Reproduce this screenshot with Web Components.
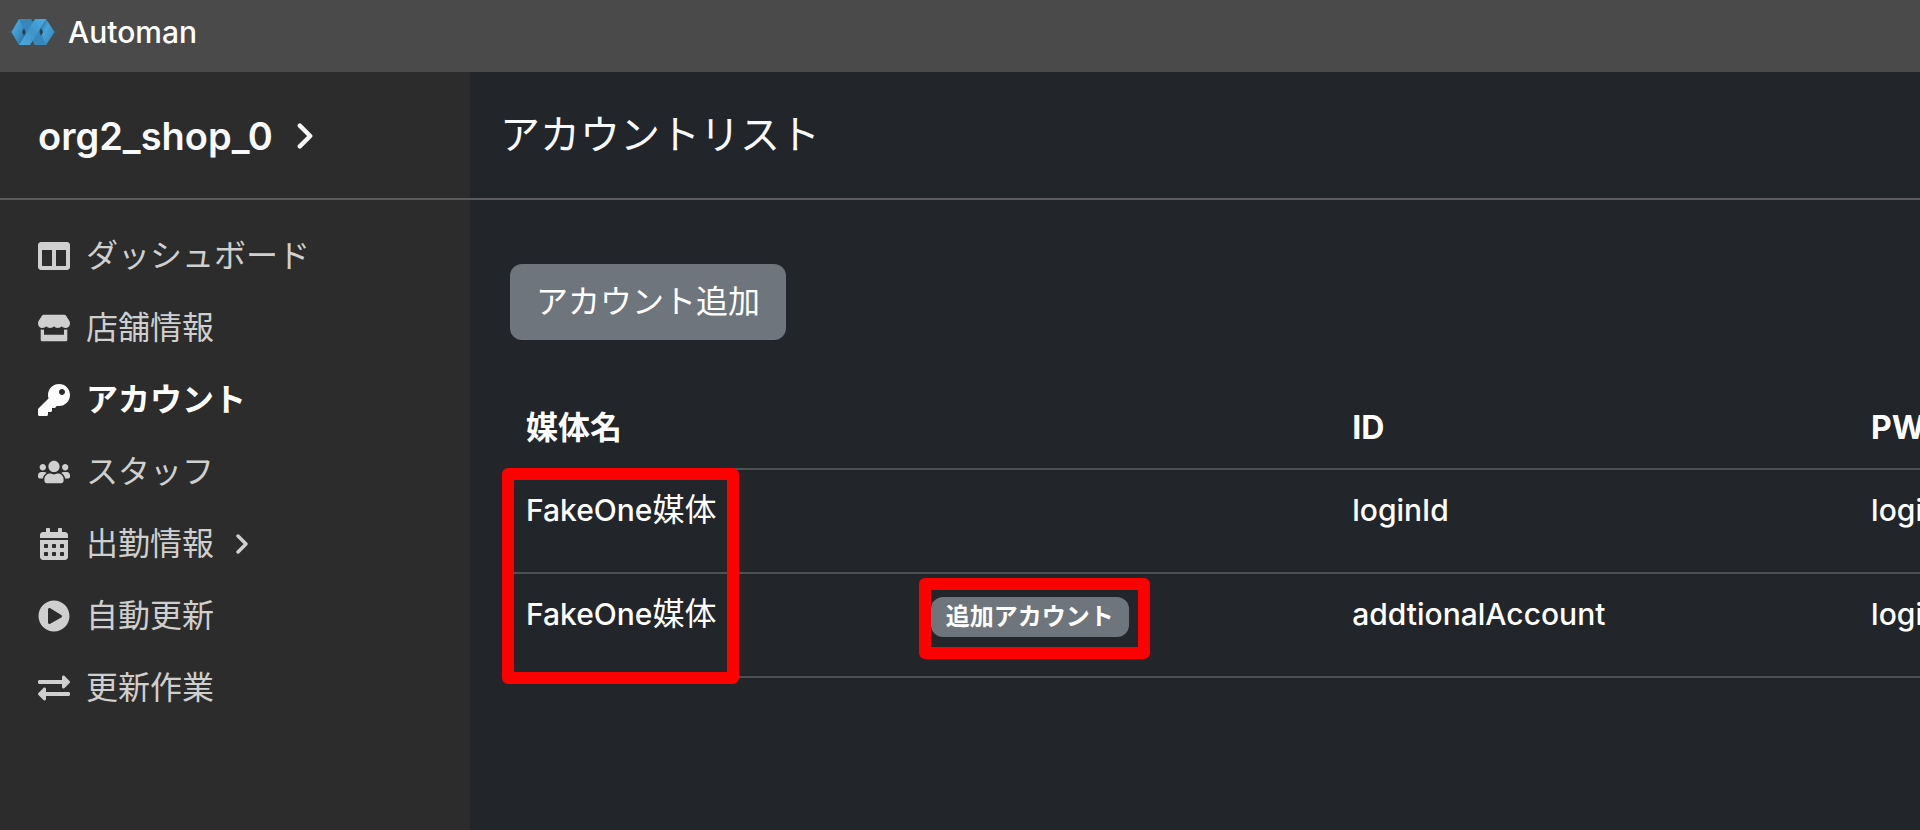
<!DOCTYPE html>
<html lang="ja">
<head>
<meta charset="utf-8">
<title>Automan</title>
<style>
  body {
    margin: 0;
    background: #22252a;
    color: #fff;
    font: 32px/48px Inter, "Noto Sans CJK JP", sans-serif;
  }
</style>
</head>
<body>
<app-shell>
  <top-bar slot="top">Automan</top-bar>

  <side-bar slot="side" shop="org2_shop_0">
    <nav-item icon="columns">ダッシュボード</nav-item>
    <nav-item icon="store">店舗情報</nav-item>
    <nav-item icon="key" active>アカウント</nav-item>
    <nav-item icon="users">スタッフ</nav-item>
    <nav-item icon="calendar" more>出勤情報</nav-item>
    <nav-item icon="play">自動更新</nav-item>
    <nav-item icon="exchange">更新作業</nav-item>
  </side-bar>

  <page-header>アカウントリスト</page-header>
  <account-list></account-list>
</app-shell>

<script>
// ---------------------------------------------------------------
// helpers
// ---------------------------------------------------------------
function attach(el, html) {
  const tmpl = document.createElement('template');
  tmpl.innerHTML = html;
  el.attachShadow({ mode: 'open' }).append(tmpl.content.cloneNode(true));
}

// name -> [viewBox, path]
const ICONS = {
  columns: ['0 0 512 512', 'M464 32H48C21.5 32 0 53.5 0 80v352c0 26.5 21.5 48 48 48h416c26.5 0 48-21.5 48-48V80c0-26.5-21.5-48-48-48zM224 416H64V160h160v256zm224 0H288V160h160v256z'],
  store: ['0 0 616 512', 'M602 118.6L537.1 15C531.3 5.7 521 0 510 0H106C95 0 84.7 5.7 78.9 15L14 118.6c-33.5 53.5-3.8 127.9 58.8 136.4 4.5.6 9.1.9 13.7.9 29.6 0 55.8-13 73.8-33.1 18 20.1 44.3 33.1 73.8 33.1 29.6 0 55.8-13 73.8-33.1 18 20.1 44.3 33.1 73.8 33.1 29.6 0 55.8-13 73.8-33.1 18.1 20.1 44.3 33.1 73.8 33.1 4.7 0 9.2-.3 13.7-.9 62.8-8.4 92.6-82.8 59-136.4zM529.5 288c-10 0-19.9-1.5-29.5-3.8V384H116v-99.8c-9.6 2.2-19.5 3.8-29.5 3.8-6 0-12.1-.4-18-1.2-5.6-.8-11.1-2.1-16.4-3.6V480c0 17.7 14.3 32 32 32h448c17.7 0 32-14.3 32-32V283.2c-5.4 1.6-10.8 2.9-16.4 3.6-6.1.8-12.1 1.2-18.2 1.2z'],
  key: ['0 0 512 512', 'M512 176C512 273.2 433.2 352 336 352c-11.2 0-22.2-1.1-32.8-3.1l-24 27A24 24 0 0 1 261.2 384H224v40c0 13.3-10.7 24-24 24h-40v40c0 13.3-10.7 24-24 24H24c-13.3 0-24-10.7-24-24v-78.1c0-6.4 2.5-12.5 7-17l161.8-161.8C163.1 213.8 160 195.3 160 176 160 78.8 238.8 0 336 0 433.5 0 512 78.5 512 176zM336 128c0 26.5 21.5 48 48 48s48-21.5 48-48-21.5-48-48-48-48 21.5-48 48z'],
  users: ['0 0 640 512', 'M96 224c35.3 0 64-28.7 64-64s-28.7-64-64-64-64 28.7-64 64 28.7 64 64 64zm448 0c35.3 0 64-28.7 64-64s-28.7-64-64-64-64 28.7-64 64 28.7 64 64 64zm32 32h-64c-17.6 0-33.5 7.1-45.1 18.6 40.3 22.1 68.9 62 75.1 109.4h66c17.7 0 32-14.3 32-32v-32c0-35.3-28.7-64-64-64zm-256 0c61.9 0 112-50.1 112-112S381.9 32 320 32 208 82.1 208 144s50.1 112 112 112zm76.8 32h-8.3c-20.8 10-43.9 16-68.5 16s-47.6-6-68.5-16h-8.3C179.6 288 128 339.6 128 403.2V432c0 26.5 21.5 48 48 48h288c26.5 0 48-21.5 48-48v-28.8c0-63.6-51.6-115.2-115.2-115.2zm-223.7-13.4C161.5 263.1 145.6 256 128 256H64c-35.3 0-64 28.7-64 64v32c0 17.7 14.3 32 32 32h65.9c6.3-47.4 34.9-87.3 75.2-109.4z'],
  calendar: ['-32 0 512 512', 'M0 464c0 26.5 21.5 48 48 48h352c26.5 0 48-21.5 48-48V192H0v272z'
    + [320, 192, 64].flatMap(x => [268, 396].map(y =>
        `M${x} ${y}c0-6.6 5.4-12 12-12h40c6.6 0 12 5.4 12 12v40c0 6.6-5.4 12-12 12h-40c-6.6 0-12-5.4-12-12v-40z`)).join('')
    + 'M400 64h-48V16c0-8.8-7.2-16-16-16h-32c-8.8 0-16 7.2-16 16v48H160V16c0-8.8-7.2-16-16-16h-32c-8.8 0-16 7.2-16 16v48H48C21.5 64 0 85.5 0 112v48h448v-48c0-26.5-21.5-48-48-48z'],
  play: ['0 0 512 512', 'M256 8C119 8 8 119 8 256s111 248 248 248 248-111 248-248S393 8 256 8zm115.7 272l-176 101c-15.8 8.8-35.7-2.5-35.7-21V152c0-18.4 19.8-29.8 35.7-21l176 107c16.4 9.2 16.4 32.9 0 42z'],
  exchange: ['0 0 512 512', 'M0 168v-16c0-13.3 10.7-24 24-24h360V80c0-21.4 25.9-32 41-17l80 80c9.4 9.4 9.4 24.6 0 34l-80 80C410 272 384 261.5 384 240v-48H24c-13.3 0-24-10.7-24-24zm488 152H128v-48c0-21.3-25.9-32.1-41-17l-80 80c-9.4 9.4-9.4 24.6 0 34l80 80C102 464 128 453.4 128 432v-48h360c13.3 0 24-10.7 24-24v-16c0-13.3-10.7-24-24-24z'],
};

const chevron = (w, h) => /*html*/`
  <svg class="chevron" width="${w}" height="${h}" viewBox="0 0 12 20" aria-hidden="true">
    <path d="M2 2l8 8-8 8" fill="none" stroke="currentColor" stroke-width="3.4" stroke-linecap="round" stroke-linejoin="round"/>
  </svg>`;

// ---------------------------------------------------------------
// layout
// ---------------------------------------------------------------
class AppShell extends HTMLElement {
  constructor() {
    super();
    attach(this, /*html*/`
      <style>
        :host { display: flex; flex-direction: column; min-height: 100vh; }
        .body { display: flex; flex: 1; }
        main { flex: 1; min-width: 0; overflow: hidden; }
      </style>
      <slot name="top"></slot>
      <div class="body">
        <slot name="side"></slot>
        <main><slot></slot></main>
      </div>
    `);
  }
}

class TopBar extends HTMLElement {
  constructor() {
    super();
    attach(this, /*html*/`
      <style>
        :host { display: block; background: #4a4a4a; }
        header { display: flex; align-items: center; padding: 8px 8px 16px; }
        a {
          display: flex; align-items: center; gap: 10px;
          color: #fff; font-size: 30px; font-weight: 500; text-decoration: none;
        }
      </style>
      <header>
        <a href="#">
          <svg width="50" height="26" viewBox="0 0 50 26" aria-hidden="true">
            <defs>
              <linearGradient id="left" x1="0" y1="0" x2="1" y2="1">
                <stop offset="0" stop-color="#2f7db0"/><stop offset=".3" stop-color="#46a3da"/>
                <stop offset=".6" stop-color="#3a8ec2"/><stop offset="1" stop-color="#235d82"/>
              </linearGradient>
              <linearGradient id="right" x1="1" y1="1" x2="0" y2="0">
                <stop offset="0" stop-color="#2f7db0"/><stop offset=".3" stop-color="#3c92c8"/>
                <stop offset=".6" stop-color="#46a3da"/><stop offset="1" stop-color="#24618a"/>
              </linearGradient>
              <linearGradient id="band" x1="0" y1="1" x2="1" y2="0">
                <stop offset="0" stop-color="#4aaae0"/><stop offset=".5" stop-color="#3d94ca"/>
                <stop offset="1" stop-color="#4caee5"/>
              </linearGradient>
            </defs>
            <path d="M0 13h50" stroke="#3a6d8c" stroke-opacity=".6"/>
            <path d="M11 0h12l3 5 2-5h10l8.500 13L38 26H27l-3-5-2 5H11L3.500 13z" fill="#2b6f9a"/>
            <path d="M11 0l6 9-2.500 4 3 4L11 26 3.500 13z" fill="url(#left)"/>
            <path d="M11 0h12l3 5-7 11z" fill="#3787ba"/>
            <path d="M38 26l-6-9 3-4-3-4L38 0l8.500 13z" fill="url(#right)"/>
            <path d="M38 26H27l-3-5 7-11z" fill="#3787ba"/>
            <path d="M27 0h11L22 26H11z" fill="url(#band)"/>
            <path d="M16 9l-2 4 2 4 1.500-4zM33 9l2 4-2 4-1.500-4z" fill="#31414b"/>
          </svg>
          <slot></slot>
        </a>
      </header>
    `);
  }
}

class SideBar extends HTMLElement {
  constructor() {
    super();
    attach(this, /*html*/`
      <style>
        :host { display: block; flex: none; width: 470px; background: #2c2c2c; }
        .shop {
          display: flex; align-items: center; gap: 24px;
          width: 100%; padding: 40px 38px 38px; box-sizing: border-box;
          background: none; color: #f8f9fa;
          border: 0; border-bottom: 2px solid #5b5b5d;
          font: 600 38px/48px Inter, sans-serif;
        }
        nav { display: flex; flex-direction: column; gap: 24px; padding: 32px 38px; }
      </style>
      <button class="shop" type="button"><span></span>${chevron(16, 26)}</button>
      <nav><slot></slot></nav>
    `);
    this.shadowRoot.querySelector('.shop span').textContent = this.getAttribute('shop');
  }
}

class NavItem extends HTMLElement {
  constructor() {
    super();
    const [box, path] = ICONS[this.getAttribute('icon')];
    attach(this, /*html*/`
      <style>
        :host { display: block; color: #cfcfcf; }
        :host([active]) { color: #fff; font-weight: 700; }
        a { display: flex; align-items: center; gap: 16px; color: inherit; text-decoration: none; }
        .chevron { margin-left: 6px; }
      </style>
      <a href="#">
        <svg width="32" height="32" viewBox="${box}" fill="currentColor" aria-hidden="true"><path fill-rule="evenodd" d="${path}"/></svg>
        <slot></slot>
        ${this.hasAttribute('more') ? chevron(12, 20) : ''}
      </a>
    `);
  }
}

class PageHeader extends HTMLElement {
  constructor() {
    super();
    attach(this, /*html*/`
      <style>
        :host { display: block; border-bottom: 2px solid #5b5b5d; }
        h1 { margin: 0; padding: 38px 30px; color: #f8f9fa; font-size: 40px; font-weight: 400; line-height: 50px; }
      </style>
      <h1><slot></slot></h1>
    `);
  }
}

// ---------------------------------------------------------------
// account list
// ---------------------------------------------------------------
class KindBadge extends HTMLElement {
  constructor() {
    super();
    attach(this, /*html*/`
      <style>
        :host {
          display: inline-block; position: relative; padding: 8px 15px;
          border-radius: 12px; background: #6e757c;
          font-size: 24px; font-weight: 700; line-height: 24px; white-space: nowrap;
        }
      </style>
      <slot></slot>
    `);
  }
}

class AccountList extends HTMLElement {
  constructor() {
    super();
    this.accounts = [
      { media: 'FakeOne', id: 'loginId', pw: 'logi' },
      { media: 'FakeOne', id: 'addtionalAccount', pw: 'logi', extra: true },
    ];
    attach(this, /*html*/`
      <style>
        :host { display: block; padding: 64px 0 64px 40px; }
        .add {
          display: block; padding: 14px 26px;
          border: 0; border-radius: 12px;
          background: #6e757c; color: #fff; font: inherit;
        }
        .list { position: relative; margin-top: 48px; }
        table { width: 100%; table-layout: fixed; border-collapse: separate; border-spacing: 0; }
        th, td {
          padding: 16px 0 16px 16px; border-bottom: 2px solid #4d5154;
          text-align: left; vertical-align: top; white-space: nowrap;
        }
        td { height: 70px; }
        .latin { font-size: 30px; font-weight: 500; }
        .c-media { width: 28.7%; }
        .c-kind { width: 29.9%; }
        .c-id { width: 36.8%; }

        /* red callout frames */
        .frame {
          position: absolute; box-sizing: border-box; pointer-events: none;
          border: 12px solid #f00; border-radius: 6px;
        }
        .frame.media { left: -8px; top: 80px; width: 237px; bottom: -6px; }
        .frame.kind { inset: -19px -21px -22px -12px; }
      </style>
      <button class="add" type="button">アカウント追加</button>
      <div class="list">
        <table>
          <colgroup><col class="c-media"><col class="c-kind"><col class="c-id"><col></colgroup>
          <thead>
            <tr><th>媒体名</th><th></th><th>ID</th><th>PW</th></tr>
          </thead>
          <tbody>${this.accounts.map(a => this.row(a)).join('')}</tbody>
        </table>
        <div class="frame media"></div>
      </div>
    `);
  }

  row(a) {
    const badge = '<kind-badge>追加アカウント<span class="frame kind"></span></kind-badge>';
    return /*html*/`
      <tr>
        <td><span class="latin">${a.media}</span>媒体</td>
        <td>${a.extra ? badge : ''}</td>
        <td class="latin">${a.id}</td>
        <td class="latin">${a.pw}</td>
      </tr>`;
  }
}

customElements.define('app-shell', AppShell);
customElements.define('top-bar', TopBar);
customElements.define('side-bar', SideBar);
customElements.define('nav-item', NavItem);
customElements.define('page-header', PageHeader);
customElements.define('kind-badge', KindBadge);
customElements.define('account-list', AccountList);
</script>
</body>
</html>
